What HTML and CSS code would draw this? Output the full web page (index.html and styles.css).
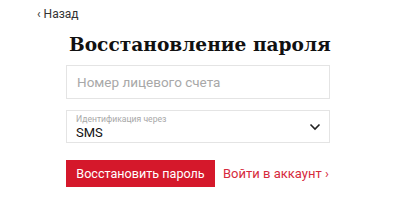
FILE: index.html
```html
<!DOCTYPE html>
<html lang="ru">
<head>
  <meta charset="UTF-8" />
  <meta name="viewport" content="width=device-width, initial-scale=1.0" />
  <title>Восстановление пароля</title>
  <link rel="stylesheet" href="styles.css">
</head>
<body>
  <div class="page">
    <a class="back-link" href="#">&lsaquo; Назад</a>

    <div class="form-container">
      <h2>Восстановление пароля</h2>
      <form id="restoreForm">
        <input type="text" class="field" placeholder="Номер лицевого счета" />
        <div class="select-field">
          <div class="select-text">
            <span class="select-label">Идентификация через</span>
            <span class="select-value">SMS</span>
          </div>
          <svg class="chevron" width="12" height="8" viewBox="0 0 12 8">
            <path d="M1.5 1.5 L6 6 L10.5 1.5" fill="none" stroke="#222" stroke-width="1.6" />
          </svg>
        </div>
        <div class="actions">
          <button type="submit" class="btn">Восстановить пароль</button>
          <a class="login-link" href="#">Войти в аккаунт &rsaquo;</a>
        </div>
      </form>
    </div>
  </div>
</body>
</html>
```

FILE: styles.css
```css
* {
  margin: 0;
  padding: 0;
  box-sizing: border-box;
  font-family: Roboto, 'Liberation Sans', sans-serif;
}

body, html {
  height: 100%;
  background: #fff;
}

.page {
  padding: 6px 0 0 37px;
}

.back-link {
  display: block;
  font-size: 12px;
  color: #333;
  text-decoration: none;
  line-height: 16px;
}

.form-container {
  width: 264px;
  margin-left: 29px;
}

h2 {
  font-family: 'DejaVu Serif', serif;
  font-weight: bold;
  font-size: 18.6px;
  color: #111;
  line-height: 26px;
  margin: 10px 0 7px 3px;
  white-space: nowrap;
}

.field {
  display: block;
  width: 100%;
  height: 34px;
  padding: 0 10px;
  border: 1px solid #e4e4e4;
  font-size: 13.5px;
  color: #222;
  outline: none;
}

.field::placeholder {
  color: #a8a8a8;
}

.select-field {
  display: flex;
  align-items: center;
  justify-content: space-between;
  height: 33px;
  margin-top: 11px;
  padding: 0 8px 0 9px;
  border: 1px solid #e4e4e4;
}

.select-text {
  display: flex;
  flex-direction: column;
}

.select-label {
  font-size: 8.6px;
  color: #a8a8a8;
  line-height: 11px;
}

.select-value {
  font-size: 13px;
  color: #111;
  line-height: 15px;
}

.actions {
  display: flex;
  align-items: center;
  margin-top: 17px;
}

.btn {
  background-color: #d5182b;
  color: #fff;
  height: 27px;
  width: 149px;
  border: none;
  font-size: 12.6px;
  cursor: pointer;
}

.login-link {
  margin-left: 8px;
  font-size: 13px;
  color: #d62a3c;
  text-decoration: none;
}
```
